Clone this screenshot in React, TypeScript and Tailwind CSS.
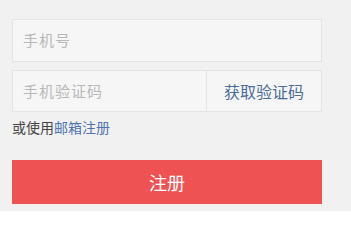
export default function App() {
  return (
    <div
      className="w-[351px] h-[211px] bg-[#f1f1f1] pt-[19px] pl-[12px] pr-[29px]"
      style={{ fontFamily: '"Noto Sans CJK SC", "Noto Sans", sans-serif' }}
    >
      <div className="h-[43px] flex items-center bg-[#f6f6f6] border border-[#e4e4e4] px-[10px]">
        <span className="text-[15px] tracking-[1px] text-[#b8b8b8]">手机号</span>
      </div>
      <div className="mt-[8px] h-[42px] flex items-stretch bg-[#f6f6f6] border border-[#e4e4e4]">
        <div className="flex-1 flex items-center px-[10px]">
          <span className="text-[15px] tracking-[1px] text-[#b8b8b8]">手机验证码</span>
        </div>
        <div className="w-[115px] flex items-center justify-center border-l border-[#e4e4e4]">
          <span className="text-[16px] text-[#4d6d98]">获取验证码</span>
        </div>
      </div>
      <div className="mt-[5px] text-[14px] leading-[20px]">
        <span className="text-[#444]">或使用</span>
        <span className="text-[#4f74b0]">邮箱注册</span>
      </div>
      <button className="mt-[23px] w-full h-[44px] bg-[#ef5252] text-white text-[18px] flex items-center justify-center">
        注册
      </button>
    </div>
  );
}
